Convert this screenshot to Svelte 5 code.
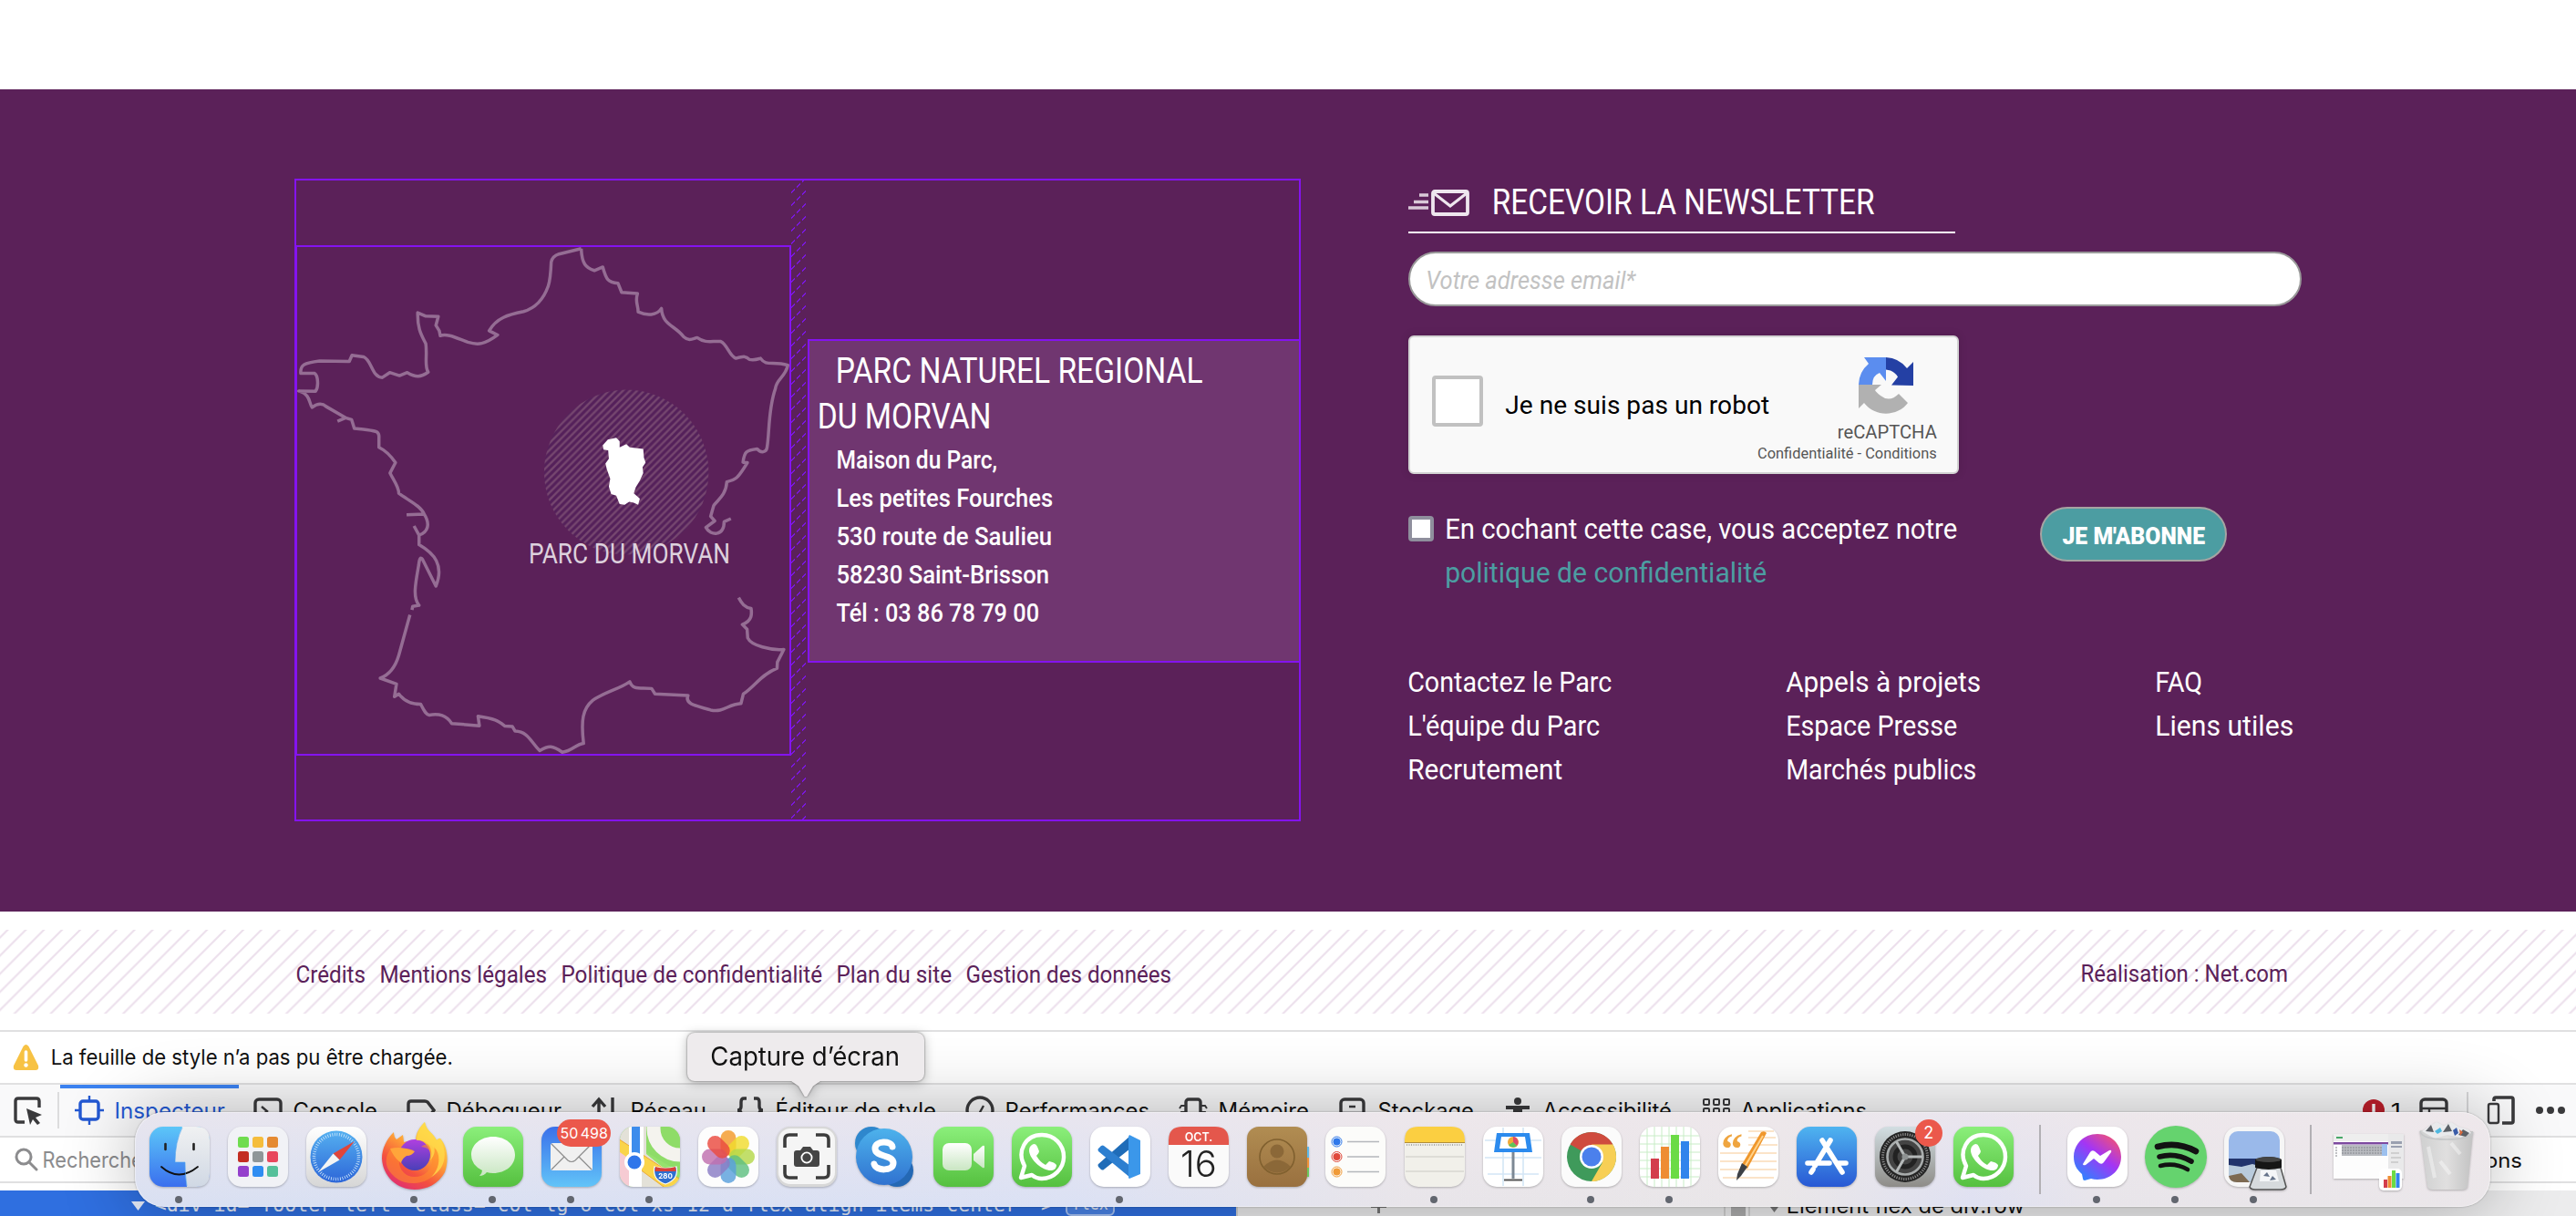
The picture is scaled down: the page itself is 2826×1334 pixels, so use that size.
<script>
  const address = [
    ['Maison du Parc,', 174],
    ['Les petites Fourches', 235],
    ['530 route de Saulieu', 234],
    ['58230 Saint-Brisson', 231],
    ['Tél : 03 86 78 79 00', 220]
  ];

  const linkColumns = [
    [['Contactez le Parc', 221], ["L'équipe du Parc", 208], ['Recrutement', 167]],
    [['Appels à projets', 211], ['Espace Presse', 185], ['Marchés publics', 206]],
    [['FAQ', 49], ['Liens utiles', 149]]
  ];

  const legal = [
    ['Crédits', 74],
    ['Mentions légales', 181],
    ['Politique de confidentialité', 284],
    ['Plan du site', 124],
    ['Gestion des données', 223]
  ];

  const tabs = [
    ['inspector', 'Inspecteur', 119],
    ['console', 'Console', 90],
    ['debugger', 'Débogueur', 124],
    ['network', 'Réseau', 81],
    ['style', 'Éditeur de style', 174],
    ['performance', 'Performances', 156],
    ['memory', 'Mémoire', 97],
    ['storage', 'Stockage', 103],
    ['accessibility', 'Accessibilité', 139],
    ['apps', 'Applications', 136]
  ];

  const dock = [
    { icon: 'finder', open: true },
    { icon: 'launchpad' },
    { icon: 'safari' },
    { icon: 'firefox', open: true },
    { icon: 'messages', open: true },
    { icon: 'mail', open: true, badge: '50 498' },
    { icon: 'maps', open: true },
    { icon: 'photos' },
    { icon: 'screenshot' },
    { icon: 'skype' },
    { icon: 'facetime' },
    { icon: 'whatsapp' },
    { icon: 'vscode', open: true },
    { icon: 'calendar' },
    { icon: 'contacts' },
    { icon: 'reminders' },
    { icon: 'notes', open: true },
    { icon: 'keynote' },
    { icon: 'chrome', open: true },
    { icon: 'numbers', open: true },
    { icon: 'pages' },
    { icon: 'appstore' },
    { icon: 'settings', badge: '2' },
    { icon: 'whatsapp' },
    { icon: 'separator' },
    { icon: 'messenger', open: true },
    { icon: 'spotify', open: true },
    { icon: 'preview', open: true },
    { icon: 'separator' },
    { icon: 'window' },
    { icon: 'trash' }
  ];

  const tiles = ['#6fdc4f', '#f5bd3c', '#e58a32', '#c32d22', '#8f9699', '#e8475d', '#9440cc', '#2f8df2', '#55c09a'];
  const petals = ['#f39a2b', '#f0dc2e', '#b4d84a', '#5fbf80', '#5aa0dc', '#8a7cc4', '#c06fae', '#ea4a3f'];
</script>

{#snippet label(text, width, size, height, base, kind)}
  <svg class="label {kind}" {width} {height}>
    <text x={-size * 0.06} y={base} font-size={size} textLength={width + size * 0.1} lengthAdjust="spacingAndGlyphs">{text}</text>
  </svg>
{/snippet}

{#snippet toolIcon(name)}
  <svg class="tool" viewBox="0 0 32 32" width="32" height="32" fill="none" stroke="currentColor" stroke-width="3.4">
    {#if name === 'inspector'}
      <rect x="6" y="6" width="20" height="20" rx="3" />
      <path d="M16 0v6M16 26v6M0 16h6M26 16h6" stroke-width="2.4" />
    {:else if name === 'console'}
      <rect x="2" y="4" width="28" height="24" rx="4" />
      <path d="M9 12l6 5-6 5" stroke-width="2.4" />
    {:else if name === 'debugger'}
      <path d="M5 6h15q2 0 3 1l7 9-7 9q-1 1-3 1H5q-3 0-3-3V9q0-3 3-3z" />
    {:else if name === 'network'}
      <path d="M9 30V5M2 12l7-8 7 8M24 2v26" />
    {:else if name === 'style'}
      <path d="M12 3H9Q6 3 6 7v5q0 4-4 4 4 0 4 4v5q0 4 3 4h3M20 3h3q3 0 3 4v5q0 4 4 4-4 0-4 4v5q0 4-3 4h-3" />
    {:else if name === 'performance'}
      <circle cx="16" cy="16" r="14" />
      <path d="M15 20l5-9" stroke-width="2.4" />
    {:else if name === 'memory'}
      <rect x="8" y="4" width="16" height="24" rx="3" />
      <path d="M7 11H3l-2 3M7 18H3l-2 3M25 11h4l2 3M25 18h4l2 3" stroke-width="2" />
    {:else if name === 'storage'}
      <rect x="3" y="4" width="25" height="25" rx="4" />
      <path d="M3 19h25M12 12h7" stroke-width="2.4" />
    {:else if name === 'accessibility'}
      <circle cx="16" cy="6" r="4" fill="currentColor" stroke="none" />
      <path d="M3 11h26v4h-8v17h-3v-8h-4v8h-3V15H3z" fill="currentColor" stroke="none" />
    {:else if name === 'apps'}
      <g stroke-width="2">
        {#each [4, 14, 24] as y}
          {#each [3, 14, 25] as x}<rect {x} {y} width="6" height="6" rx="1" />{/each}
        {/each}
      </g>
    {:else if name === 'picker'}
      <path d="M12 29H5q-3 0-3-3V6q0-3 3-3h20q3 0 3 3v7" />
      <path d="M14 14l17 7-7 3 5 6-3 2-5-6-3 6z" fill="currentColor" stroke="none" />
    {:else if name === 'frame'}
      <rect x="2" y="4" width="28" height="24" rx="4" />
      <path d="M2 14h28M11 14v14" stroke-width="2.4" />
    {:else if name === 'responsive'}
      <path d="M8 6V4q0-2 2-2h17q2 0 2 2v24q0 2-2 2H17" stroke-width="3.6" />
      <rect x="2" y="9" width="11" height="21" rx="2" stroke-width="2.4" />
    {/if}
  </svg>
{/snippet}

{#snippet appIcon(name)}
  <svg class="app" viewBox="0 0 66 66" width="66" height="66">
    {#if name === 'finder'}
      <rect width="66" height="66" rx="15" fill="url(#g-finder)" />
      <path d="M36 0h15q15 0 15 15v36q0 15-15 15H41q-2-11-2-27H28Q28 16 36 0z" fill="url(#g-silver)" />
      <path d="M17.500 19v6M48.500 19v6" stroke="#222" stroke-width="2.600" stroke-linecap="round" />
      <path d="M13 44q19 17 40 0" fill="none" stroke="#111" stroke-width="1.800" stroke-linecap="round" />
      <path d="M36 1Q28 17 28 39h11q0 14 2 26" fill="none" stroke="#4aa2ee" stroke-width=".6" />
    {:else if name === 'launchpad'}
      <rect width="66" height="66" rx="15" fill="#f1f2f6" />
      {#each tiles as fill, i}
        <rect x={11 + (i % 3) * 16} y={11 + Math.floor(i / 3) * 16} width="12" height="12" rx="2.500" {fill} />
      {/each}
    {:else if name === 'safari'}
      <rect width="66" height="66" rx="15" fill="url(#g-white)" />
      <circle cx="33" cy="33" r="28.500" fill="url(#g-safari)" />
      <circle cx="33" cy="33" r="24.500" fill="none" stroke="#cfe8fb" stroke-width="3.500" stroke-dasharray=".8 1.760" />
      <path d="M53 16L36.500 36.500 29.500 29.500z" fill="#e0453a" />
      <path d="M13 50l16.500-20.500 7 7z" fill="#f4f4f4" />
    {:else if name === 'firefox'}
      <path d="M-3 35C-3 24 2 14 10 6q0 5 3 8l7-5 1 8q6-2 13-1C34 6 39 0 44-5c1 9 9 12 13 20q3-3 4-2c9 10 9 26 5 37-7 13-20 19-33 19C13 69-2 54-3 35z" fill="url(#g-fox)" />
      <circle cx="33" cy="31" r="17" fill="url(#g-foxcore)" />
      <path d="M40 22q12 1 12 14c0 12-9 19-19 19C22 55 15 46 16 36q2-5 11-7l5-3q-6-3-25-2Q-1 34 3 45c6 12 18 18 30 17 18-1 30-14 27-32-3-8-6-4-8-9-3-2-7-3-12 1z" fill="#ff8a2e" opacity=".6" />
      <path d="M6 24q12-3 27 3-3 5-9 5-5 3-6 8-8-6-12-16z" fill="#ffa53a" />
      <path d="M44-5c-6 6-9 13-9 20 14-1 19 11 15 22 6-7 5-12 4-15 9 9 6 26-4 34 18-10 19-28 11-43-1 1-3 0-4 2-3-8-12-11-13-20z" fill="#ffd94a" opacity=".8" />
    {:else if name === 'messages'}
      <rect width="66" height="66" rx="15" fill="url(#g-green)" />
      <path d="M33 11c14 0 24 9 24 20S47 51 33 51q-4 0-7-1-3 4-8 4 3-3 3-6Q9 42 9 31C9 20 19 11 33 11z" fill="url(#g-bubble)" />
    {:else if name === 'mail'}
      <rect width="66" height="66" rx="15" fill="url(#g-mail)" />
      <rect x="10" y="18" width="46" height="30" rx="2.500" fill="#f0f0f0" />
      <path d="M11 19l18 18q4 3 8 0l18-18M11 47l14-14M55 47L41 33" fill="none" stroke="#8b8b8b" stroke-width="1.200" />
    {:else if name === 'maps'}
      <g clip-path="url(#tile)">
        <rect width="66" height="66" fill="#96e26d" />
        <path d="M0 0h29v30L66 60v6H0z" fill="#e3e1d8" />
        <path d="M29 0h37v50L29 28z" fill="#8edc68" />
        <circle cx="66" cy="2" r="29" fill="none" stroke="#f4f3ee" stroke-width="15" />
        <path d="M-2 13l70 46v10H52L-2 29z" fill="#fad44a" stroke="#ecaa38" />
        <path d="M0 28l10 7v31H0z" fill="#f6cbd3" />
        <path d="M10 36h14v30H10z" fill="#fff" />
        <path d="M10 0h16v34H10z" fill="#fff" />
        <path d="M13 0h9v32h-9z" fill="#3c8cec" />
        <circle cx="16" cy="39" r="11" fill="#fff" />
        <circle cx="16" cy="39" r="7.500" fill="#2f76ea" />
        <path d="M38 44q12 3 24 0 3 14-12 19-15-5-12-19z" fill="#2f6fd0" stroke="#fff" stroke-width="1.200" />
        <path d="M39 44q11 3 22 0l.6 5H38.400z" fill="#d8403a" />
      </g>
      <text x="50" y="56.500" class="shield">280</text>
    {:else if name === 'photos'}
      <rect width="66" height="66" rx="15" fill="#fdfdfd" />
      {#each petals as fill, i}
        <rect x="24.500" y="4" width="17" height="28" rx="8.500" {fill} opacity=".82" transform="rotate({i * 45} 33 33)" />
      {/each}
      <circle cx="33" cy="33" r="1.500" fill="#fff" />
    {:else if name === 'screenshot'}
      <rect width="66" height="66" rx="15" fill="#d8d8d8" />
      <rect x="2" y="2" width="62" height="61" rx="13" fill="#f5f5f5" />
      <path d="M9 23V14q0-5 5-5h9M43 9h9q5 0 5 5v9M57 42v9q0 5-5 5h-9M23 56h-9q-5 0-5-5v-9" fill="none" stroke="#3c3c3c" stroke-width="3.600" />
      <path d="M22 26h4l3-4h8l3 4h4q3 0 3 3v12q0 3-3 3H22q-3 0-3-3V29q0-3 3-3z" fill="#454545" />
      <circle cx="33" cy="34" r="5.600" fill="none" stroke="#fff" stroke-width="1.800" />
    {:else if name === 'skype'}
      <circle cx="18" cy="18" r="18" fill="#2e87cd" />
      <circle cx="46" cy="48" r="18" fill="#2468b4" />
      <circle cx="32" cy="33" r="31" fill="url(#g-skype)" />
      <path d="M41 22c-1-7-19-7-19 2 0 10 20 6 20 16 0 9-19 9-21 1" fill="none" stroke="#fff" stroke-width="7" stroke-linecap="round" />
    {:else if name === 'facetime'}
      <rect width="66" height="66" rx="15" fill="url(#g-green)" />
      <rect x="10" y="18" width="32" height="30" rx="7" fill="url(#g-bubble)" />
      <path d="M44 30l10-9q2-1 2 1v22q0 2-2 1l-10-8z" fill="url(#g-bubble)" />
    {:else if name === 'whatsapp'}
      <rect width="66" height="66" rx="15" fill="url(#g-green)" />
      <path d="M10 56l4-13C5 27 15 9 33 9c14 0 24 11 24 24S46 57 33 57q-6 0-11-4z" fill="none" stroke="#fff" stroke-width="4.400" stroke-linejoin="round" />
      <path d="M22 20q4-3 6 2l2 5q0 2-3 5 4 7 10 10l4-4q6 1 8 4 0 5-5 6C33 49 19 35 19 26q0-4 3-6z" fill="#fff" />
    {:else if name === 'vscode'}
      <rect width="66" height="66" rx="15" fill="#fff" />
      <path d="M44 10L9 41q-1 1 0 3l3 3q2 1 3 0L44 24z" fill="#1f6cb8" />
      <path d="M44 56L9 27q-1-2 0-3l3-3q2-1 3 0l29 22z" fill="#2d7fd0" />
      <path d="M43 9l12 6v37l-12 5q-1 0-1-2V11z" fill="#3b97ea" />
    {:else if name === 'calendar'}
      <rect width="66" height="66" rx="15" fill="#fafafa" />
      <path d="M15 0h36q15 0 15 15v5H0v-5Q0 0 15 0z" fill="#e4574c" />
      <text x="33" y="16" class="month">OCT.</text>
      <text x="33" y="55" class="day">16</text>
    {:else if name === 'contacts'}
      <path d="M58 22h10v12H58z" fill="#5cb8ea" />
      <path d="M58 34h10v11H58z" fill="#f09238" />
      <path d="M58 45h10v10H58z" fill="#6bc95b" />
      <rect width="66" height="66" rx="13" fill="url(#g-book)" />
      <circle cx="33" cy="33" r="19" fill="none" stroke="#80602f" stroke-width="1.600" />
      <circle cx="33" cy="27" r="7.500" fill="#8b6838" />
      <path d="M18 44q15-15 30 0-15 13-30 0z" fill="#8b6838" />
    {:else if name === 'reminders'}
      <rect width="66" height="66" rx="15" fill="#fcfcfa" />
      {#each ['#2f78ea', '#e0493c', '#f09a38'] as fill, i}
        <circle cx="12.500" cy={16.500 + i * 16.500} r="4" {fill} />
        <circle cx="12.500" cy={16.500 + i * 16.500} r="5.500" fill="none" stroke={fill} stroke-width="1" />
        <path d="M24 {16.500 + i * 16.500}h35" stroke="#b4b7bb" stroke-width="1.300" />
      {/each}
    {:else if name === 'notes'}
      <rect width="66" height="66" rx="15" fill="#f1f0ea" />
      <path d="M15 0h36q15 0 15 15v2H0v-2Q0 0 15 0z" fill="#fbcf41" />
      <path d="M0 17.500h66" stroke="#b08e3c" />
      <path d="M2 20h62" stroke="#aaa" stroke-width="2" stroke-dasharray="1 1.500" />
      <path d="M1 33h64M1 49h64" stroke="#cbcac4" />
    {:else if name === 'keynote'}
      <rect width="66" height="66" rx="15" fill="#fff" />
      <path d="M2 15h62M2 34h62M5 52h56M22 1v64M44 1v64" stroke="#d4e6f6" stroke-width="1.600" fill="none" />
      <path d="M15 7h36l3 21H12z" fill="#2c8bee" />
      <path d="M20 11h26l2 13H18z" fill="#fff" />
      <circle cx="33" cy="17" r="6" fill="#f0a838" />
      <path d="M33 17V11a6 6 0 0 1 4 10z" fill="#de4a6a" />
      <path d="M33 17l4 4a6 6 0 0 1-9-1z" fill="#5cc45c" />
      <path d="M33 28v29" stroke="#7c8894" stroke-width="3" />
      <path d="M23 58.500h20" stroke="#555" stroke-width="2" />
    {:else if name === 'chrome'}
      <rect width="66" height="66" rx="15" fill="#fbfbfb" />
      <circle cx="33" cy="33" r="27" fill="#3f9a5b" />
      <path d="M33 33L9.600 19.500A27 27 0 0 1 56.400 19.500z" fill="#cf4b3e" />
      <path d="M33 19.500h23.400A27 27 0 0 1 33 60L44.700 39.700z" fill="#f7cf55" />
      <circle cx="33" cy="33" r="13" fill="#fff" />
      <circle cx="33" cy="33" r="10.500" fill="#4b80ec" />
    {:else if name === 'numbers'}
      <rect width="66" height="66" rx="15" fill="#fff" />
      <path d="M8 2v62M16 0v66M24 0v66M32 0v66M40 0v66M48 0v66M56 1v64M1 10h64M0 19h66M0 28h66M0 37h66M0 46h66M1 55h64" stroke="#c8edc6" stroke-width="1" />
      <path d="M12 35h9v22h-9z" fill="#d33d4c" />
      <path d="M23 22h9v35h-9z" fill="#ee8d33" />
      <path d="M34 9h9v48h-9z" fill="#6bdb45" />
      <path d="M45 16h9v41h-9z" fill="#3184ec" />
    {:else if name === 'pages'}
      <rect width="66" height="66" rx="15" fill="#fff" />
      <path d="M33 5h28M33 12h30M33 20h32M2 29h62M2 38h62M2 47h62M5 56h56" stroke="#fadcb8" stroke-width="1.400" />
      <text x="15" y="41" class="quote">“</text>
      <path d="M47 6q4-2 6 1L32 46l-7-3z" fill="#f0972c" />
      <path d="M49 10L29 44" stroke="#ffd28a" stroke-width="2" />
      <path d="M26 40l6 4-7 10-5 5 1-7z" fill="#3d4045" />
    {:else if name === 'appstore'}
      <rect width="66" height="66" rx="15" fill="url(#g-store)" />
      <path d="M37 15L20 43M28 15l22 35M12 40h24M46 40h8M18 47l-2 3" stroke="#fff" stroke-width="5.600" stroke-linecap="round" />
    {:else if name === 'settings'}
      <rect width="66" height="66" rx="15" fill="url(#g-metal)" />
      <circle cx="33" cy="33" r="28" fill="#242424" />
      <circle cx="33" cy="33" r="24.500" fill="none" stroke="#8a8a8a" stroke-width="3" stroke-dasharray="1.200 1.400" />
      <circle cx="33" cy="33" r="19.500" fill="#444" stroke="#a8acac" stroke-width="2.600" />
      <circle cx="33" cy="33" r="11" fill="none" stroke="#222" stroke-width="5" />
      <path d="M33 33h19M33 33l-9.500-16.500M33 33l-9.500 16.500" stroke="#b5b9b9" stroke-width="3" />
      <circle cx="33" cy="33" r="3.500" fill="#8e9292" />
    {:else if name === 'messenger'}
      <rect width="66" height="66" rx="15" fill="#fff" />
      <path d="M33 8c15 0 26 11 26 25S48 58 33 58q-4 0-7-1l-7 2q-2 0-2-2l-1-5C10 47 7 41 7 33 7 19 18 8 33 8z" fill="url(#g-messenger)" />
      <path d="M17 41l8-13q2-3 5-1l6 5 10-6q3-1 2 2l-8 11q-2 3-5 1l-6-5-9 7q-3 1-3-1z" fill="#fff" />
    {:else if name === 'spotify'}
      <circle cx="33" cy="33" r="34" fill="#65d36e" />
      <path d="M13 22q22-6 42 5" fill="none" stroke="#121212" stroke-width="6.600" stroke-linecap="round" />
      <path d="M15 33q18-5 35 5" fill="none" stroke="#121212" stroke-width="5.600" stroke-linecap="round" />
      <path d="M16 43q16-4 30 4" fill="none" stroke="#121212" stroke-width="4.600" stroke-linecap="round" />
    {:else if name === 'preview'}
      <rect width="66" height="66" rx="15" fill="#f6f6f6" />
      <rect x="5" y="5" width="56" height="56" rx="10" fill="#9ab9ea" />
      <path d="M5 35h56v12H5z" fill="#22346c" />
      <path d="M5 42l14 2 12-3 14 4 16-1v7q0 10-10 10H15Q5 61 5 51z" fill="#b9cbdc" />
      <path d="M5 54l14-3 9 10H14q-8 0-9-7z" fill="#7d6a52" />
      <path d="M36 45h26l6 21q-1 3-6 3H34q-5 0-6-3z" fill="#d6dadd" stroke="#555" stroke-width="1.500" />
      <path d="M40 48h17l3 12H39z" fill="#f4f6f8" />
      <path d="M34 36q15-6 29 0v9q-14 4-29 0z" fill="#161616" />
      <ellipse cx="48.500" cy="36" rx="14" ry="3" fill="#444" />
      <path d="M43 54l4-4 3 5zM50 59l3-5 4 4z" fill="#66748a" />
    {:else if name === 'window'}
      <path d="M-5 8h77v49H-5z" fill="#fdfdfd" />
      <path d="M-5 8h77v8h-77z" fill="#eeeeee" />
      <path d="M-2 12h7" stroke="#48a868" stroke-width="2" />
      <path d="M-5 17h60v2.500h-60z" fill="#7d4a9f" />
      <path d="M4 20h50v12H4z" fill="#b9bbc0" />
      <path d="M4 23h50M4 26h50M4 29h50M-2 22v12" stroke="#83868c" stroke-dasharray="2 1" />
      <path d="M48 19h6v13h-6z" fill="#9cc0ee" />
      <path d="M55 8h17v49H55z" fill="#e9e9ea" />
      <path d="M58 16h12v3H58zM58 21h12v2H58z" fill="#9aa0b0" />
      <path d="M58 29h9M58 34h11M58 39h8" stroke="#b5b5b5" />
      <rect x="45" y="46" width="25" height="24" rx="5" fill="#fff" />
      <path d="M50 58h4v9h-4z" fill="#d33d4c" />
      <path d="M54.500 54h4v13h-4z" fill="#ee8d33" />
      <path d="M59 48h4v19h-4z" fill="#6bdb45" />
      <path d="M63.500 51h4v16h-4z" fill="#3184ec" />
    {:else if name === 'trash'}
      <path d="M4 4l58 1-6 61q-1 3-6 3H18q-5 0-6-3z" fill="url(#g-bin)" />
      <path d="M6 5l7-5 9-5 8 4 8-4 8 5 11 3 3 4-12 5-14-3-14 4z" fill="#e9eaec" />
      <path d="M10 5l6-7 3 8zM29 6l6-9 4 8zM46 9l5-6 7 4-4 4z" fill="#5c6066" />
      <path d="M20 5l6-4 2 4-5 3z" fill="#50b8e0" />
      <path d="M40 4l4-3 2 6-4 3z" fill="#3a5ca8" />
      <path d="M47 3l4 3-3 4z" fill="#d8673c" />
      <path d="M4 5q2 9 29 9T62 6" fill="none" stroke="#c4c6c8" stroke-width="1.500" />
      <path d="M13 22l7 34M38 18l10 12M26 38l11 14" stroke="#fff" stroke-width="4" opacity=".4" />
    {/if}
  </svg>
{/snippet}

<svg class="defs" width="0" height="0" aria-hidden="true">
  <defs>
    <linearGradient id="g-finder" x2="0" y2="1"><stop stop-color="#5cc6f8" /><stop offset="1" stop-color="#3a6fee" /></linearGradient>
    <linearGradient id="g-silver" x2="0" y2="1"><stop stop-color="#f0f1f2" /><stop offset="1" stop-color="#d0d8e4" /></linearGradient>
    <linearGradient id="g-white" x2="0" y2="1"><stop stop-color="#fff" /><stop offset="1" stop-color="#d6d6d6" /></linearGradient>
    <linearGradient id="g-safari" x2="0" y2="1"><stop stop-color="#55b0f0" /><stop offset="1" stop-color="#2d66d8" /></linearGradient>
    <linearGradient id="g-green" x2="0" y2="1"><stop stop-color="#8bef7b" /><stop offset="1" stop-color="#55c03f" /></linearGradient>
    <linearGradient id="g-bubble" x2="0" y2="1"><stop stop-color="#fff" /><stop offset="1" stop-color="#c9e6c2" /></linearGradient>
    <linearGradient id="g-mail" x2="0" y2="1"><stop stop-color="#3a70ea" /><stop offset="1" stop-color="#62c4f8" /></linearGradient>
    <linearGradient id="g-skype" x2="0" y2="1"><stop stop-color="#4db2ec" /><stop offset="1" stop-color="#3072d0" /></linearGradient>
    <linearGradient id="g-book" x2="0" y2="1"><stop stop-color="#b18d52" /><stop offset="1" stop-color="#99703f" /></linearGradient>
    <linearGradient id="g-store" x2="0" y2="1"><stop stop-color="#4fb4f0" /><stop offset="1" stop-color="#2858d4" /></linearGradient>
    <linearGradient id="g-metal" x2="0" y2="1"><stop stop-color="#d2dee2" /><stop offset="1" stop-color="#8e8c88" /></linearGradient>
    <linearGradient id="g-bin" x2="1" y2="0"><stop stop-color="#cfd0d0" /><stop offset=".5" stop-color="#e0dfdf" /><stop offset="1" stop-color="#c2c2c2" /></linearGradient>
    <linearGradient id="g-fox" x1=".8" x2=".2" y2="1"><stop stop-color="#fff14a" /><stop offset=".4" stop-color="#ffa436" /><stop offset=".7" stop-color="#f4513e" /><stop offset="1" stop-color="#de2a78" /></linearGradient>
    <linearGradient id="g-foxcore" x2="0" y2="1"><stop stop-color="#b040e0" /><stop offset="1" stop-color="#4a3fb8" /></linearGradient>
    <linearGradient id="g-messenger" x1=".9" x2=".1" y2="1"><stop stop-color="#fb5566" /><stop offset=".45" stop-color="#a335f5" /><stop offset="1" stop-color="#1f8cff" /></linearGradient>
    <clipPath id="tile"><rect width="66" height="66" rx="15" /></clipPath>
  </defs>
</svg>

<div class="page">
  <footer class="site">
    <section class="place">
      <div class="map">
        <svg viewBox="38 211 1471 1331" preserveAspectRatio="none" width="544" height="560">
          <defs>
            <pattern id="disc" width="21" height="18.500" patternUnits="userSpaceOnUse">
              <rect width="21" height="18.500" fill="#54205a" />
              <path d="M-5 23L26-4.500M-15.500 14L15.500-13.500M5 32.500L36 5" stroke="#75466f" stroke-width="6" />
            </pattern>
          </defs>
          <ellipse cx="1020" cy="803" rx="244" ry="215" fill="url(#disc)" />
          <g class="coast">
            <path d="M886 220L820 234Q800 240 797 255Q795 300 788 318C775 350 750 375 715 384C670 392 635 400 613 434L638 445C600 470 580 472 550 464C520 455 490 440 468 447L465 434L455 420L462 397C445 396 435 396 425 396L401 387C400 430 412 445 425 468C430 500 420 525 432 542C410 556 395 556 370 543L347 551L318 543L296 556C265 556 265 510 240 502L206 498L198 514L110 513C65 518 52 522 54 545L95 545C105 550 108 580 98 592L48 591C85 600 78 625 88 634C105 622 120 624 130 632L187 661L163 670M187 661L205 666L213 689L240 691C280 696 288 695 286 715L286 738C310 748 325 765 335 778L319 805C330 825 345 840 345 858C370 875 410 890 420 912L368 914M420 912C440 940 430 960 405 967L390 943M405 967L405 992C450 1015 480 1045 455 1100L415 1030Q407 1020 404 1045C395 1090 385 1130 405 1150L386 1153L384 1162M378 1175L345 1280C335 1310 320 1330 290 1340L338 1355L332 1388L345 1381C365 1405 395 1408 410 1408C420 1425 425 1435 435 1436C465 1432 485 1436 502 1458L584 1464L580 1439C630 1445 640 1452 660 1465L682 1466L690 1478C730 1480 735 1505 763 1529C790 1515 800 1515 830 1533C860 1530 870 1512 893 1510C885 1450 890 1420 920 1398C950 1378 1000 1368 1030 1349C1040 1372 1060 1364 1095 1367L1105 1381L1203 1385C1190 1410 1240 1414 1270 1423C1310 1430 1320 1408 1360 1406L1367 1381C1400 1362 1420 1330 1467 1314L1468 1298L1487 1265C1450 1268 1390 1255 1380 1235L1378 1212L1364 1200C1395 1190 1392 1170 1390 1158C1370 1155 1362 1145 1353 1130" />
            <path d="M886 220C888 260 900 270 925 277L950 268C960 300 965 308 995 310L1006 334L1053 337C1045 360 1055 365 1055 385C1080 395 1110 395 1124 376C1127 420 1165 420 1190 450C1205 462 1215 456 1230 452C1255 468 1275 460 1300 462C1320 470 1325 500 1345 506C1370 500 1375 500 1385 509C1400 512 1410 508 1418 506C1435 528 1455 512 1499 524C1492 555 1465 560 1462 585C1440 640 1445 700 1437 740C1435 750 1420 755 1408 742C1375 745 1370 750 1366 777L1379 778C1350 820 1345 822 1318 828C1315 865 1290 875 1279 890L1270 918L1282 930L1256 947C1270 970 1310 970 1310 932L1330 924" />
          </g>
          <path d="M950 733L965 718L990 713L1000 722L1000 738L1020 730L1030 738L1070 742L1072 765L1077 778L1068 790L1070 805L1060 825L1048 842L1042 858L1060 872L1055 888L1040 882L1028 880L1015 888L1000 886L990 864L975 860L968 840L972 820L962 795L958 780L968 768L966 746L952 744z" fill="#fff" />
          <text x="730" y="1041" class="map-name" font-size="73" textLength="598" lengthAdjust="spacingAndGlyphs">PARC DU MORVAN</text>
        </svg>
      </div>
      <div class="gutter"></div>
      <div class="card">
        <div class="inset">{@render label('PARC NATUREL REGIONAL', 399, 38, 50, 35, 'light')}</div>
        <div class="line">{@render label('DU MORVAN', 187, 38, 50, 35, 'light')}</div>
        {#each address as [text, width]}
          <div class="inset">{@render label(text, width, 27, 42, 29.4, 'light medium')}</div>
        {/each}
      </div>
    </section>

    <section class="contact">
      <header>
        <svg class="envelope" width="67" height="30" viewBox="0 0 67 30">
          <path d="M12 7h10M6 14.500h16M0 21h22" stroke="#d9c9d8" stroke-width="3.400" />
          <rect x="27" y="3" width="38" height="25" rx="2" fill="none" stroke="#eee6ee" stroke-width="3.800" />
          <path d="M28 5l18 14L64 5" fill="none" stroke="#eee6ee" stroke-width="3.200" />
        </svg>
        {@render label('RECEVOIR LA NEWSLETTER', 416, 39, 58, 39, 'light')}
      </header>
      <div class="email">{@render label('Votre adresse email*', 227, 28, 56, 39, 'hint')}</div>
      <div class="captcha">
        <span class="tick"></span>
        <div class="robot">{@render label('Je ne suis pas un robot', 287, 28, 40, 30, 'dark')}</div>
        <div class="brand">
          <svg width="64" height="64" viewBox="0 0 64 64">
            <path d="M61 32V6l-7 7A31 31 0 0 0 31 1v13.500l5 1q6 3 8 7l-7 9z" fill="#2440a4" />
            <path d="M31 1H7l5 7A31 31 0 0 0 1 31h15q0-10 8-13l7 9z" fill="#5b8def" />
            <path d="M1 31v26l6-6c13 17 38 14 48 0l-10-10q-10 10-20 2-5-4-6-6l7-6z" fill="#b1b1b1" />
          </svg>
          {@render label('reCAPTCHA', 107, 20, 24, 20, 'grey')}
          {@render label('Confidentialité - Conditions', 195, 16, 22, 18, 'grey')}
        </div>
      </div>
      <div class="consent">
        <span class="box"></span>
        <div class="terms">
          {@render label('En cochant cette case, vous acceptez notre', 559, 31, 48, 35, 'light')}
          {@render label('politique de confidentialité', 350, 31, 48, 35, 'teal')}
        </div>
        <div class="subscribe">{@render label("JE M'ABONNE", 154, 26, 56, 39, 'strong')}</div>
      </div>
      <nav class="links">
        {#each linkColumns as column}
          <div>
            {#each column as [text, width]}{@render label(text, width, 31, 48, 35, 'light')}{/each}
          </div>
        {/each}
      </nav>
    </section>
  </footer>

  <div class="legal">
    <svg class="hatch" width="2826" height="92">
      <defs>
        <pattern id="hatch" width="19.880" height="19.880" patternUnits="userSpaceOnUse" x="8.500">
          <path d="M-2 21.880L21.880-2M-2 2L2-2M17.880 21.880L21.880 17.880" stroke="#ecdfec" stroke-width="2.100" />
        </pattern>
      </defs>
      <rect width="2826" height="92" fill="url(#hatch)" />
    </svg>
    <nav>
      {#each legal as [text, width]}{@render label(text, width, 26, 92, 58, 'plum')}{/each}
    </nav>
    {@render label('Réalisation : Net.com', 225, 26, 92, 57, 'plum')}
  </div>

  <div class="notice">
    <svg width="29" height="28" viewBox="0 0 29 28">
      <path d="M11.500 2q3-4 6 0L28 23q1 5-3 5H4q-4 0-3-5z" fill="#f7c244" />
      <path d="M14.500 8v9" stroke="#fff" stroke-width="3.600" stroke-linecap="round" />
      <circle cx="14.500" cy="22.500" r="2.200" fill="#fff" />
    </svg>
    {@render label('La feuille de style n’a pas pu être chargée.', 439, 22.5, 56, 36, 'ui')}
  </div>

  <div class="toolbar">
    <div class="pick">{@render toolIcon('picker')}</div>
    {#each tabs as [icon, text, width], i}
      <div class="tab" class:active={i === 0}>
        {@render toolIcon(icon)}
        {@render label(text, width, 24, 56, 37, i === 0 ? 'ui blue' : 'ui')}
      </div>
    {/each}
    <div class="side">
      <svg width="24" height="26" viewBox="0 0 24 26"><circle cx="12" cy="13" r="12" fill="#bf1f2b" /><path d="M12 6v9" stroke="#fff" stroke-width="3.400" /></svg>
      {@render label('1', 9, 22, 56, 36, 'ui')}
      {@render toolIcon('frame')}
      <span class="bar"></span>
      {@render toolIcon('responsive')}
      <svg width="32" height="8" viewBox="0 0 32 8"><circle cx="4" cy="4" r="4" /><circle cx="16" cy="4" r="4" /><circle cx="28" cy="4" r="4" /></svg>
    </div>
  </div>

  <div class="search">
    <svg width="26" height="26" viewBox="0 0 26 26" fill="none" stroke="#8c8c8e" stroke-width="3"><circle cx="10" cy="10" r="8" /><path d="M16 16l8 8" stroke-linecap="round" /></svg>
    {@render label('Rechercher', 116, 24, 48, 33, 'ui faint')}
    <div class="rest">{@render label('Animations', 123, 22, 48, 33, 'ui')}</div>
  </div>

  <div class="code">
    <div class="node">
      <svg width="15" height="10"><path d="M0 0h15L7.500 10z" fill="#e8eefb" /></svg>
      {@render label('<div id="footer-left" class="col-lg-6 col-xs-12 d-flex align-items-center" >', 983, 22, 28, 22.6, 'mono')}
      <span class="flex-tag">{@render label('flex', 38, 19, 26, 19, 'mono')}</span>
    </div>
    <div class="middle">
      <svg width="17" height="8"><path d="M0 0h17v2H10v6H7V2H0z" fill="#777" /></svg>
    </div>
    <div class="scroll"><span></span></div>
    <div class="rules">
      <svg width="9" height="6"><path d="M0 0h9L4.500 6z" fill="#777" /></svg>
      {@render label('Élément flex de div.row', 259, 22.5, 28, 24.6, 'ui')}
    </div>
  </div>

  <div class="dock">
    {#each dock as { icon, open, badge }}
      {#if icon === 'separator'}
        <div class="separator"></div>
      {:else}
        <div class="slot">
          {@render appIcon(icon)}
          {#if open}<span class="dot"></span>{/if}
          {#if badge}<span class="badge" class:wide={badge.length > 1}>{badge}</span>{/if}
        </div>
      {/if}
    {/each}
  </div>

  <div class="tooltip">
    {@render label('Capture d’écran', 205, 28, 53, 36, 'ui')}
  </div>
</div>

<style>
  :global(body) {
    margin: 0;
    background: #fff;
  }
  .defs {
    position: absolute;
  }
  .page {
    position: relative;
    box-sizing: border-box;
    width: 2826px;
    height: 1334px;
    padding-top: 98px;
    overflow: hidden;
    font-family: Roboto, 'Liberation Sans', sans-serif;
  }
  .page svg {
    display: block;
    flex: none;
  }
  .label {
    overflow: visible;
  }
  .light { fill: #fff; }
  .medium { font-weight: 500; }
  .dark { fill: #000; }
  .grey { fill: #555; }
  .teal { fill: #4c9da2; }
  .plum { fill: #5b2159; }
  .hint {
    fill: #c2c2c2;
    font-style: italic;
  }
  .strong {
    fill: #fff;
    font-weight: 900;
  }
  .ui {
    fill: #111;
    font-family: Inter, 'Liberation Sans', sans-serif;
  }
  .blue { fill: #2459d2; }
  .faint { fill: #8c8c8e; }
  .mono {
    fill: #e8eefb;
    font-family: 'DejaVu Sans Mono', monospace;
  }

  .site {
    display: flex;
    box-sizing: border-box;
    height: 902px;
    padding: 98px 0 0 323px;
    background: #5b2159;
  }
  .place {
    display: flex;
    align-items: center;
    box-sizing: border-box;
    width: 1104px;
    height: 705px;
    box-shadow: inset 0 0 0 2px #8413f0;
  }
  .map {
    width: 544px;
    margin-left: 1px;
    box-shadow: inset 0 0 0 2px #8413f0;
  }
  .coast {
    fill: none;
    stroke: #956d94;
    stroke-width: 3.500px;
    stroke-linejoin: round;
  }
  .coast path {
    vector-effect: non-scaling-stroke;
  }
  .map-name {
    fill: #ddd1dd;
  }
  /* Dashed diagonal strokes: the dark stripes break each line into short marks. */
  .gutter {
    width: 18px;
    height: 701px;
    background:
      repeating-linear-gradient(90deg, transparent 0 4px, #5b2159 4px 6px),
      repeating-linear-gradient(135deg, transparent 0 9.100px, #7a17de 9.100px 9.900px);
  }
  .card {
    box-sizing: border-box;
    width: 541px;
    height: 355px;
    margin-top: 2px;
    padding: 12.600px 0 0 13px;
    background: #703670;
    box-shadow: inset 0 0 0 2px #8413f0;
  }
  .inset {
    padding-left: 20px;
  }

  .contact {
    width: 980px;
    margin-left: 118px;
  }
  .contact header {
    display: flex;
    align-items: flex-start;
    gap: 27px;
    box-sizing: border-box;
    width: 600px;
    height: 60px;
    border-bottom: 2px solid #fff;
  }
  .envelope {
    margin-top: 11px;
  }
  .email {
    box-sizing: border-box;
    height: 60px;
    margin-top: 20px;
    padding-left: 19px;
    border: 2px solid #9a9a9a;
    border-radius: 30px;
    background: #fff;
  }
  .captcha {
    display: flex;
    box-sizing: border-box;
    width: 604px;
    height: 152px;
    margin-top: 32px;
    padding-left: 24px;
    border: 2px solid #d3d3d3;
    border-radius: 6px;
    background: #f9f9f9;
    box-shadow: 0 0 8px 2px rgba(0, 0, 0, 0.08);
  }
  .tick {
    box-sizing: border-box;
    width: 56px;
    height: 56px;
    margin: 42px 26px 0 0;
    border: 4px solid #c1c1c1;
    border-radius: 4px;
    background: #fff;
  }
  .robot {
    margin-top: 54px;
  }
  .brand {
    display: flex;
    flex-direction: column;
    align-items: flex-end;
    width: 184px;
    padding-top: 21px;
  }
  .brand > svg:first-child {
    margin-right: 22px;
    margin-bottom: 6px;
  }
  .consent {
    display: flex;
    align-items: flex-start;
    height: 96px;
    margin-top: 36px;
  }
  .box {
    box-sizing: border-box;
    width: 28px;
    height: 28px;
    margin: 10px 14px 0 0;
    border: 4px solid #8f8f9d;
    border-radius: 4px;
    background: #fff;
  }
  .terms {
    width: 651px;
  }
  .subscribe {
    display: flex;
    justify-content: center;
    box-sizing: border-box;
    width: 205px;
    height: 60px;
    border: 2px solid #a6a4a2;
    border-radius: 30px;
    background: #4c9da2;
  }
  .links {
    display: grid;
    grid-template-columns: 415px 405px auto;
    margin: 72px 0 0 1px;
  }

  .legal {
    display: flex;
    justify-content: space-between;
    position: relative;
    height: 92px;
    margin: 20px 0 18px;
    padding: 0 317px 0 326px;
  }
  .hatch {
    position: absolute;
    inset: 0;
  }
  .legal nav {
    display: flex;
    gap: 18px;
  }
  .legal nav,
  .legal > .label {
    position: relative;
  }

  .notice {
    display: flex;
    align-items: center;
    gap: 14px;
    height: 56px;
    padding-left: 14px;
    border-top: 2px solid #e0e0e1;
    border-bottom: 2px solid #e0e0e1;
  }
  .toolbar {
    display: flex;
    height: 56px;
    border-bottom: 2px solid #e0e0e1;
    background: #f9f9fa;
    color: #3a3a3c;
  }
  .pick {
    display: flex;
    align-items: center;
    box-sizing: border-box;
    width: 66px;
    padding-left: 15px;
    background: linear-gradient(#dcdcdd, #dcdcdd) right 1px top 8px / 2px 40px no-repeat;
  }
  .tab {
    display: flex;
    align-items: center;
    gap: 13px;
    padding: 0 17px 0 16px;
  }
  .tab.active {
    padding-right: 16px;
    background: linear-gradient(#3b82f0, #3b82f0) top / 100% 4px no-repeat;
    color: #2459d2;
  }
  .side {
    display: flex;
    align-items: center;
    margin-left: auto;
    padding-right: 12px;
  }
  .side > :global(svg:nth-child(2)) {
    margin: 0 21px 0 8px;
  }
  .side svg:last-child {
    margin-left: 22px;
    fill: #3a3a3c;
  }
  .bar {
    width: 2px;
    height: 40px;
    margin: 0 20px;
    background: #d6d6d8;
  }
  .search {
    display: flex;
    align-items: center;
    gap: 6px;
    height: 48px;
    padding-left: 16px;
    border-bottom: 2px solid #e0e0e1;
  }
  .rest {
    margin-left: auto;
    padding-right: 60px;
  }
  .code {
    display: flex;
    height: 28px;
    margin-top: 8px;
    background: #ececed;
  }
  .node {
    display: flex;
    box-sizing: border-box;
    width: 1356px;
    padding-left: 144px;
    background: #2f6fe0;
  }
  .node > svg:first-child {
    margin: 12px 12px 0 0;
  }
  .flex-tag {
    box-sizing: border-box;
    width: 54px;
    height: 28px;
    margin-left: 15px;
    padding-left: 6px;
    border: 2px solid #a9c4f5;
    border-radius: 6px;
    background: #4a84e8;
  }
  .middle {
    width: 535px;
    border-left: 2px solid #d0d0d0;
    box-sizing: border-box;
  }
  .middle svg {
    margin: 17px 0 0 146px;
  }
  .scroll {
    box-sizing: border-box;
    width: 29px;
    padding-left: 6px;
    border: solid #d0d0d0;
    border-width: 0 2px;
  }
  .scroll span {
    display: block;
    width: 16px;
    height: 28px;
    background: #adadad;
  }
  .rules {
    display: flex;
    align-items: flex-start;
    gap: 10px;
    padding-left: 22px;
  }
  .rules > svg:first-child {
    margin-top: 18px;
  }

  .dock {
    position: absolute;
    left: 148px;
    top: 1220px;
    display: flex;
    box-sizing: border-box;
    width: 2584px;
    height: 104px;
    padding-left: 6px;
    border-radius: 32px;
    background:
      linear-gradient(rgba(240, 232, 236, 0.65), rgba(240, 232, 236, 0)),
      linear-gradient(90deg, #d9e0f2, #dbe1f4 40%, #e8e5ea 54%, #e9e6e8 70%, #dfe1f2 78%, #e8e5ea 84%, #ebe7ea);
    box-shadow:
      inset 0 0 0 1px rgba(255, 255, 255, 0.4),
      0 0 2px rgba(0, 0, 0, 0.35),
      0 2px 80px rgba(0, 0, 0, 0.3);
  }
  .slot {
    position: relative;
    width: 86.040px;
    padding: 16px 0 0 10px;
    box-sizing: border-box;
    flex: none;
  }
  .app {
    overflow: visible;
    filter: drop-shadow(0 1px 1px rgba(0, 0, 0, 0.25));
  }
  .dot {
    position: absolute;
    left: 38px;
    top: 92px;
    width: 8px;
    height: 8px;
    border-radius: 50%;
    background: #62666f;
  }
  .badge {
    position: absolute;
    top: 8px;
    right: 2px;
    width: 30px;
    height: 30px;
    border-radius: 15px;
    background: #eb584b;
    color: #fff;
    font: 18px/30px Inter, sans-serif;
    text-align: center;
    white-space: nowrap;
  }
  .badge.wide {
    right: 0;
    width: 59px;
    font-size: 16px;
    word-spacing: -2px;
  }
  .separator {
    flex: none;
    box-sizing: border-box;
    width: 39px;
    height: 76px;
    margin-top: 14px;
    background: linear-gradient(#b2b0b4, #b2b0b4) center / 2px 100% no-repeat;
  }
  .shield,
  .month,
  .day,
  .quote {
    font-family: Inter, sans-serif;
    text-anchor: middle;
  }
  .shield {
    fill: #fff;
    font-size: 8px;
    font-weight: 700;
  }
  .month {
    fill: #fff;
    font-size: 12.500px;
    font-weight: 600;
  }
  .day {
    fill: #222;
    font-size: 40px;
    font-weight: 300;
  }
  .quote {
    fill: #efa540;
    font-family: 'Liberation Serif', serif;
    font-size: 48px;
    font-weight: 700;
  }

  .tooltip {
    position: absolute;
    left: 754px;
    top: 1133px;
    box-sizing: border-box;
    width: 260px;
    height: 53px;
    padding-left: 27px;
    border-radius: 8px;
    background: #eeebed;
    filter: drop-shadow(0 0 1px rgba(0, 0, 0, 0.5)) drop-shadow(0 2px 6px rgba(0, 0, 0, 0.25));
  }
  .tooltip::after {
    content: '';
    position: absolute;
    left: 114px;
    top: 53px;
    width: 32px;
    height: 18px;
    background: #eeebed;
    clip-path: polygon(0 0, 100% 0, 75% 30%, 54% 95%, 46% 95%, 25% 30%);
  }
</style>
